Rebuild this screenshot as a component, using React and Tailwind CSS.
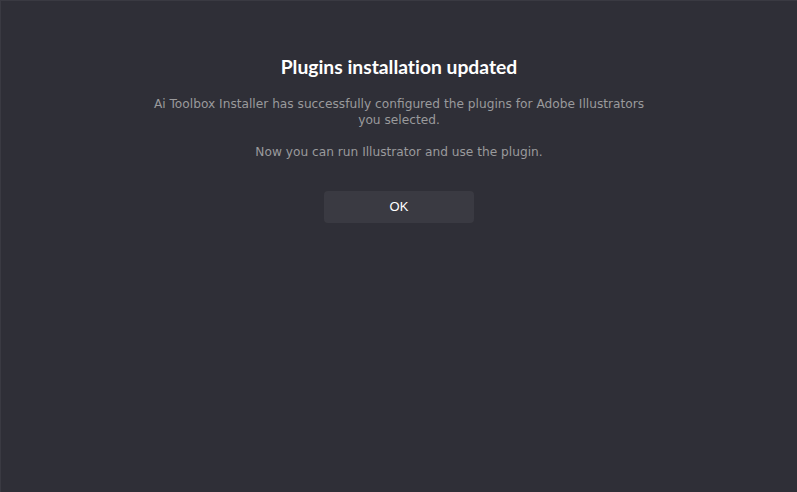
export default function App() {
  return (
    <div className="w-[797px] h-[492px] bg-[#2f2f37] border-l border-t border-[#3a3a42] flex flex-col items-center">
      <h1 className="mt-[53px] text-[19.3px] font-bold text-white leading-[26px] font-['Lato','Open_Sans',sans-serif] [font-variant-ligatures:none]">
        Plugins installation updated
      </h1>
      <div className="mt-[16px] text-center text-[12.2px] leading-[16px] text-[#9a9a9c] font-['DejaVu_Sans',Verdana,sans-serif]">
        <p>Ai Toolbox Installer has successfully configured the plugins for Adobe Illustrators<br />you selected.</p>
        <p className="mt-[16px]">Now you can run Illustrator and use the plugin.</p>
      </div>
      <button className="mt-[31px] w-[150px] h-[32px] rounded-[4px] bg-[#3a3a42] text-white text-[13px] font-['Liberation_Sans',Arial,sans-serif]">
        OK
      </button>
    </div>
  );
}
